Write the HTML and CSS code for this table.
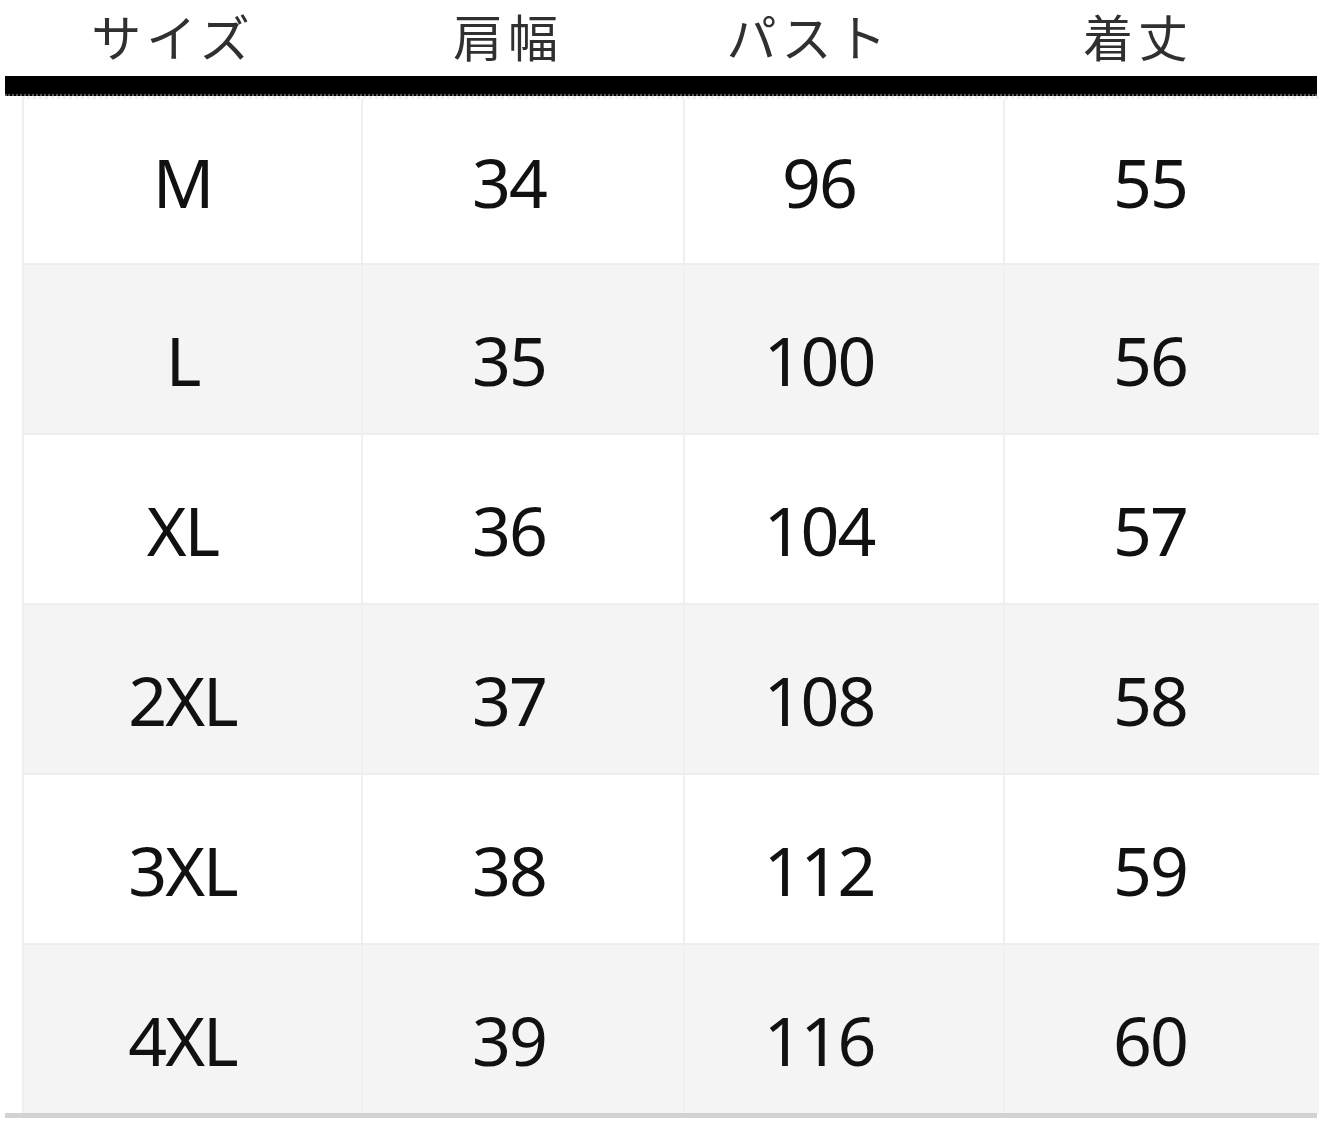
FILE: index.html
```html
<!DOCTYPE html>
<html lang="ja">
<head>
<meta charset="utf-8">
<title>サイズ表</title>
<link rel="stylesheet" href="styles.css">
</head>
<body>
<div class="sheet">
  <div class="head">
    <div class="hc h1">サイズ</div>
    <div class="hc h2">肩幅</div>
    <div class="hc h3">パスト</div>
    <div class="hc h4">着丈</div>
  </div>
  <div class="bar"></div>
  <div class="body">
    <div class="row">
      <div class="c c1">M</div><div class="c c2">34</div><div class="c c3">96</div><div class="c c4">55</div>
    </div>
    <div class="row alt">
      <div class="c c1">L</div><div class="c c2">35</div><div class="c c3">100</div><div class="c c4">56</div>
    </div>
    <div class="row">
      <div class="c c1">XL</div><div class="c c2">36</div><div class="c c3">104</div><div class="c c4">57</div>
    </div>
    <div class="row alt">
      <div class="c c1">2XL</div><div class="c c2">37</div><div class="c c3">108</div><div class="c c4">58</div>
    </div>
    <div class="row">
      <div class="c c1">3XL</div><div class="c c2">38</div><div class="c c3">112</div><div class="c c4">59</div>
    </div>
    <div class="row alt">
      <div class="c c1">4XL</div><div class="c c2">39</div><div class="c c3">116</div><div class="c c4">60</div>
    </div>
  </div>
  <div class="foot"></div>
</div>
</body>
</html>
```

FILE: styles.css
```css
html, body {
  margin: 0;
  padding: 0;
  background: #ffffff;
}

.sheet {
  width: 1322px;
  height: 1128px;
  overflow: hidden;
  font-family: "Noto Sans", "Open Sans", "Noto Sans CJK JP", sans-serif;
}

.head {
  display: grid;
  grid-template-columns: 358px 322px 320px 312px;
  margin-left: 5px;
  height: 76px;
}

.hc {
  display: flex;
  align-items: center;
  justify-content: center;
  padding-bottom: 6px;
  font-family: "Noto Sans CJK JP", sans-serif;
  font-weight: 400;
  font-size: 50px;
  line-height: 1;
  color: #303030;
  letter-spacing: 5px;
  box-sizing: border-box;
}

.h1 { padding-right: 22px; }
.h2 { padding-right: 32px; }
.h3 { padding-right: 72px; }
.h4 { padding-right: 46px; }

.bar {
  margin-left: 5px;
  width: 1312px;
  height: 18px;
  background: #000000;
  border-bottom: 2px dotted #555555;
}

.body {
  margin-left: 22px;
  width: 1295px;
  border-left: 2px solid #efefef;
  border-top: 3px dotted #efefef;
}

.row {
  display: grid;
  grid-template-columns: 339px 322px 320px 312px;
  height: 170px;
  border-top: 2px solid #eeeeee;
  box-sizing: border-box;
}

.row:first-child {
  height: 164px;
  border-top: none;
}

.row.alt {
  background: #f4f4f4;
}

.c {
  display: flex;
  align-items: center;
  justify-content: center;
  padding-top: 20px;
  font-size: 68px;
  letter-spacing: -2px;
  color: #111111;
  border-right: 2px solid #f0f0f0;
  box-sizing: border-box;
}

.c4 { border-right: none; }

.c1 { padding-right: 20px; }
.c2 { padding-right: 28px; }
.c3 { padding-right: 50px; }
.c4 { padding-right: 22px; }

.row:first-child .c { padding-top: 0; }

.foot {
  margin-left: 5px;
  width: 1312px;
  height: 5px;
  background: #d2d2d2;
}
```
